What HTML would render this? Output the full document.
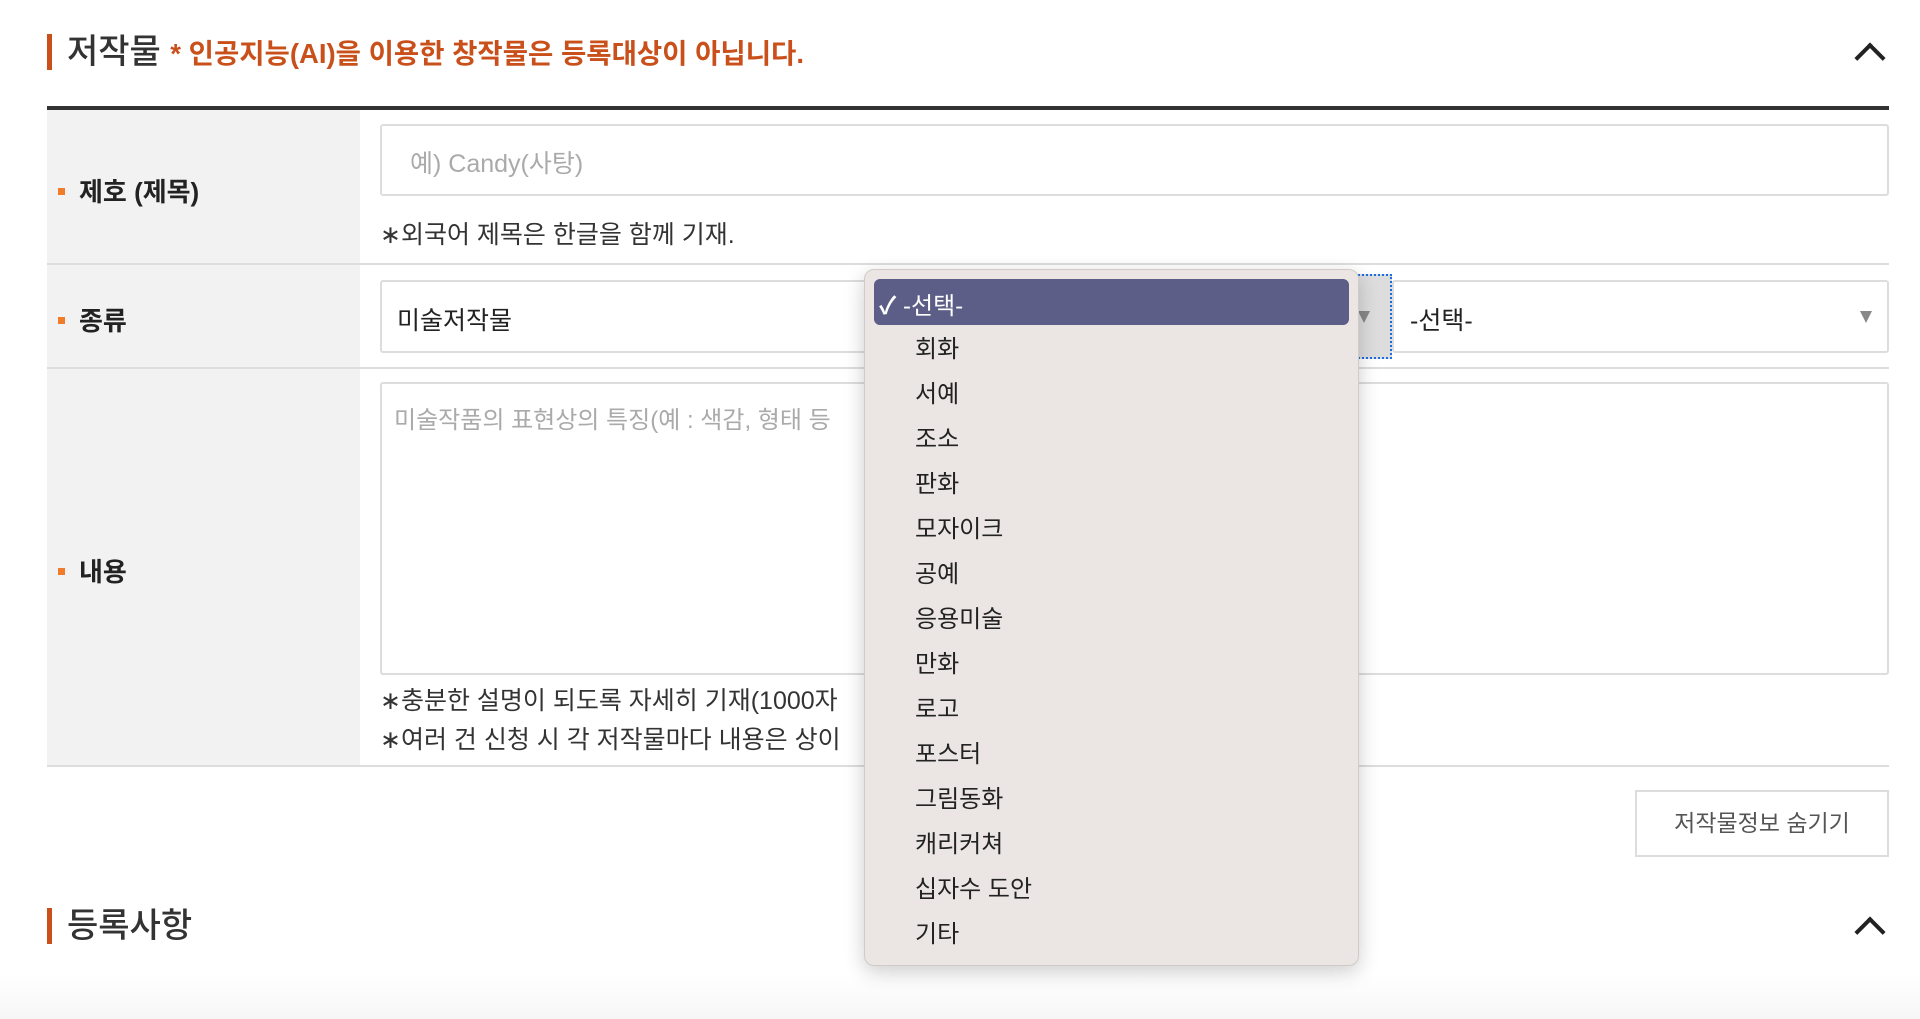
<!DOCTYPE html>
<html><head><meta charset="utf-8"><style>
*{box-sizing:border-box;margin:0;padding:0}
body{width:1920px;height:1019px;overflow:hidden;background:#fff;font-family:"Liberation Sans","Noto Sans CJK KR",sans-serif;color:#222;position:relative}
.a{position:absolute}
.h{left:47px;height:36px;border-left:5px solid #c9501b;padding-left:15px;font-size:34px;line-height:36px;color:#333;font-weight:500}
.h b{color:#c9501b;font-size:27.5px;font-weight:bold}
.chev{width:22px;height:22px;border-left:4px solid #222;border-top:4px solid #222;transform:rotate(45deg)}
.lab{left:47px;width:313px;background:#f2f2f2}
.lt{left:58px;font-size:26px;font-weight:bold;color:#222}
.lt:before{content:"";display:inline-block;width:7px;height:7px;background:#f07b2b;margin-right:14px;vertical-align:middle;position:relative;top:-3px}
.line{left:47px;width:1842px;height:2px;background:#ddd}
.box{border:2px solid #ddd;background:#fff;border-radius:3px}
.t{font-size:25px}
.arr{width:0;height:0;border-left:6px solid transparent;border-right:6px solid transparent;border-top:12px solid #888}
.dd{left:864px;top:269px;width:495px;height:697px;background:#ebe6e3;border:1px solid #d0cbc8;border-radius:10px;box-shadow:0 6px 20px rgba(0,0,0,.2)}
.it{position:absolute;left:50px;font-size:24px;color:#222}
</style></head><body>
<div class="a h" style="top:34px">저작물 <b>* 인공지능(AI)을 이용한 창작물은 등록대상이 아닙니다.</b></div>
<div class="a chev" style="left:1859px;top:47px"></div>
<div class="a" style="left:47px;top:106px;width:1842px;height:4px;background:#333"></div>
<div class="a lab" style="top:110px;height:153px"></div>
<div class="a lt" style="top:172px">제호 (제목)</div>
<div class="a box" style="left:380px;top:124px;width:1509px;height:72px"></div>
<div class="a t" style="left:410px;top:144px;color:#aaa">예) Candy(사탕)</div>
<div class="a" style="left:380px;top:215px;font-size:25px;color:#333">∗외국어 제목은 한글을 함께 기재.</div>
<div class="a line" style="top:263px"></div>
<div class="a lab" style="top:265px;height:102px"></div>
<div class="a lt" style="top:301px">종류</div>
<div class="a box" style="left:380px;top:280px;width:1005px;height:73px"></div>
<div class="a t" style="left:397px;top:301px">미술저작물</div>
<div class="a" style="left:1355px;top:274px;width:37px;height:85px;border:2px dotted #1a6ee0;background:#ddd"></div>
<div class="a arr" style="left:1358px;top:311px"></div>
<div class="a box" style="left:1392px;top:280px;width:497px;height:73px"></div>
<div class="a t" style="left:1410px;top:301px">-선택-</div>
<div class="a arr" style="left:1860px;top:311px"></div>
<div class="a line" style="top:367px"></div>
<div class="a lab" style="top:369px;height:396px"></div>
<div class="a lt" style="top:552px">내용</div>
<div class="a box" style="left:380px;top:382px;width:1509px;height:293px"></div>
<div class="a" style="left:394px;top:400px;font-size:24px;color:#aaa">미술작품의 표현상의 특징(예 : 색감, 형태 등</div>
<div class="a" style="left:380px;top:681px;font-size:25px;color:#333">∗충분한 설명이 되도록 자세히 기재(1000자</div>
<div class="a" style="left:380px;top:720px;font-size:25px;color:#333">∗여러 건 신청 시 각 저작물마다 내용은 상이</div>
<div class="a line" style="top:765px"></div>
<div class="a box" style="left:1635px;top:790px;width:254px;height:67px;border-radius:0;font-size:23px;color:#555;text-align:center;line-height:63px">저작물정보 숨기기</div>
<div class="a h" style="top:908px">등록사항</div>
<div class="a chev" style="left:1859px;top:921px"></div>
<div class="a" style="left:0;top:975px;width:1920px;height:44px;background:linear-gradient(#fff,#f6f6f6)"></div>
<div class="a dd">
<div class="a" style="left:9px;top:9px;width:475px;height:46px;background:#5c5e87;border-radius:6px"></div>
<div class="it" style="left:14px;top:16px;color:#fff"><b>✓</b> -선택-</div>
<div class="it" style="top:59px">회화</div>
<div class="it" style="top:104px">서예</div>
<div class="it" style="top:149px">조소</div>
<div class="it" style="top:194px">판화</div>
<div class="it" style="top:239px">모자이크</div>
<div class="it" style="top:284px">공예</div>
<div class="it" style="top:329px">응용미술</div>
<div class="it" style="top:374px">만화</div>
<div class="it" style="top:419px">로고</div>
<div class="it" style="top:464px">포스터</div>
<div class="it" style="top:509px">그림동화</div>
<div class="it" style="top:554px">캐리커쳐</div>
<div class="it" style="top:599px">십자수 도안</div>
<div class="it" style="top:644px">기타</div>
</div>
</body></html>
